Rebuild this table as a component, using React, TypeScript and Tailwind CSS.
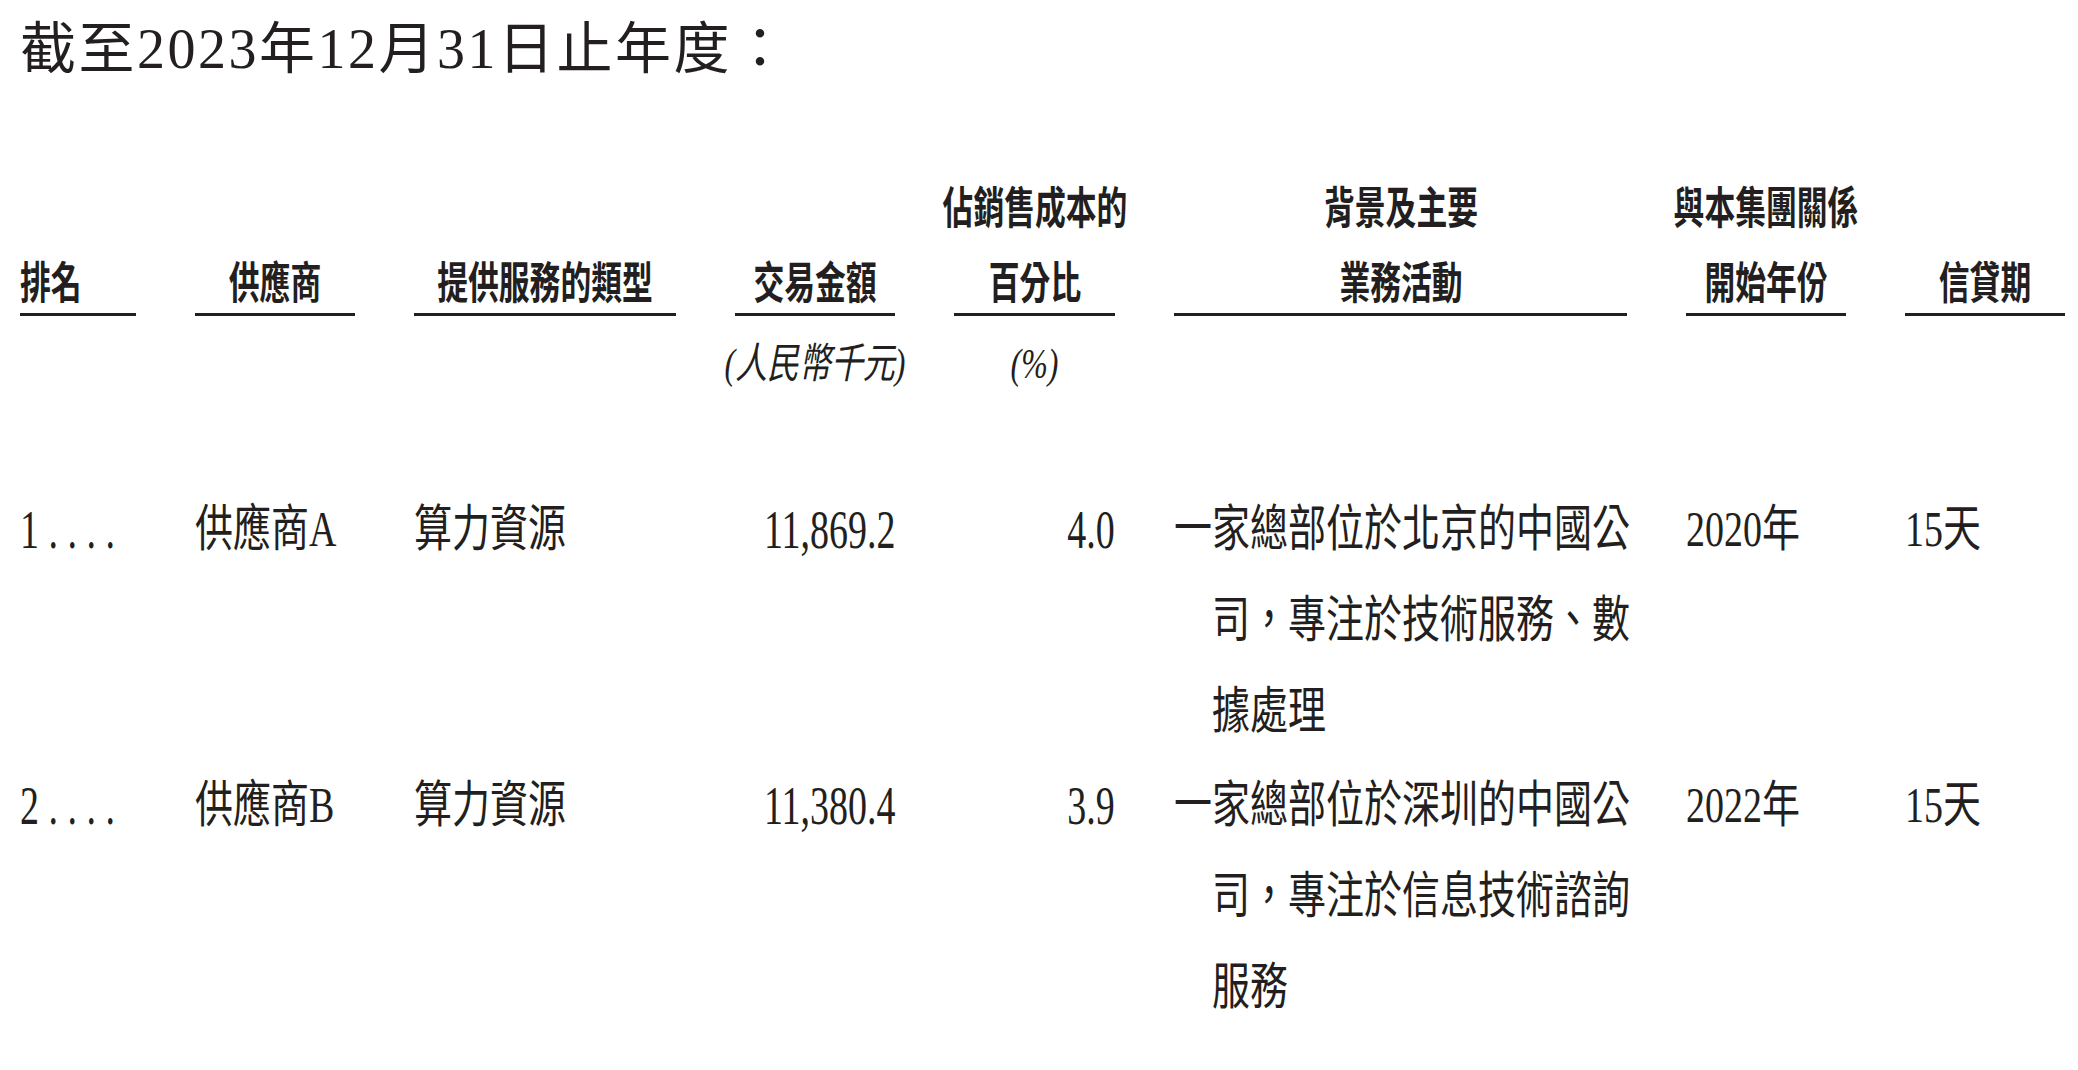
import React from "react";

const bodyFont = "font-['Liberation_Serif','Noto_Sans_CJK_TC',serif]";

function HeadCell({ lines, align = "center" }: { lines: string[]; align?: "left" | "center" }) {
  return (
    <div className="flex flex-col justify-end border-b-[3px] border-[#231f20] pb-[5px]">
      <div className={`flex flex-col gap-[19px] ${align === "left" ? "items-start" : "items-center"}`}>
        {lines.map((l, i) => (
          <span
            key={i}
            className={`inline-block whitespace-nowrap text-[44px] leading-[56px] font-bold font-['Noto_Sans_CJK_TC',sans-serif] scale-x-[0.7] ${align === "left" ? "origin-left" : "origin-center"}`}
          >
            {l}
          </span>
        ))}
      </div>
    </div>
  );
}

function Cell({ text, align = "left" }: { text: string; align?: "left" | "right" }) {
  return (
    <div className={`flex ${align === "right" ? "justify-end" : "justify-start"}`}>
      <span
        className={`inline-block whitespace-nowrap text-[50px] leading-[91px] ${bodyFont} scale-x-[0.76] ${align === "right" ? "origin-right" : "origin-left"}`}
      >
        {text}
      </span>
    </div>
  );
}

function NumCell({ text, align = "left" }: { text: string; align?: "left" | "right" }) {
  return (
    <div className={`flex h-[91px] items-center ${align === "right" ? "justify-end" : "justify-start"}`}>
      <span
        className={`inline-block whitespace-nowrap text-[55px] leading-[91px] ${bodyFont} scale-x-[0.69] ${align === "right" ? "origin-right" : "origin-left"}`}
      >
        {text}
      </span>
    </div>
  );
}

function Desc({ text }: { text: string }) {
  return (
    <div className="min-w-0">
      <div
        className={`w-[601px] pl-[1em] indent-[-1em] text-[50px] leading-[91px] ${bodyFont} scale-x-[0.76] origin-left`}
      >
        {text}
      </div>
    </div>
  );
}

function Row({ rank, name, type, amt, pct, desc, year, credit }: { rank: string; name: string; type: string; amt: string; pct: string; desc: string; year: string; credit: string }) {
  return (
    <>
      <NumCell text={rank} />
      <Cell text={name} />
      <Cell text={type} />
      <NumCell text={amt} align="right" />
      <NumCell text={pct} align="right" />
      <Desc text={desc} />
      <Cell text={year} />
      <Cell text={credit} />
    </>
  );
}

export default function App() {
  return (
    <div className="w-[2078px] h-[1070px] overflow-hidden bg-white text-[#231f20]">
      <div className={`pl-[20px] pt-[21px] text-[56px] leading-[56px] tracking-[2.5px] ${bodyFont}`}>
        截至2023年12月31日止年度：
      </div>

      <div className="pl-[20px] mt-[100px] grid grid-cols-[116px_160px_262px_160px_161px_453px_160px_160px] gap-x-[59px]">
        <HeadCell lines={["排名"]} align="left" />
        <HeadCell lines={["供應商"]} />
        <HeadCell lines={["提供服務的類型"]} />
        <HeadCell lines={["交易金額"]} />
        <HeadCell lines={["佔銷售成本的", "百分比"]} />
        <HeadCell lines={["背景及主要", "業務活動"]} />
        <HeadCell lines={["與本集團關係", "開始年份"]} />
        <HeadCell lines={["信貸期"]} />

        <div className="col-start-4 mt-[23px] flex justify-center">
          <span className={`inline-block whitespace-nowrap italic text-[42px] leading-[50px] ${bodyFont} scale-x-[0.76] origin-center`}>
            (人民幣千元)
          </span>
        </div>
        <div className="col-start-5 mt-[23px] flex justify-center">
          <span className={`inline-block whitespace-nowrap italic text-[42px] leading-[50px] ${bodyFont} scale-x-[0.76] origin-center`}>
            (%)
          </span>
        </div>
      </div>

      <div className="pl-[20px] mt-[95px] grid grid-cols-[116px_160px_262px_160px_161px_453px_160px_160px] gap-x-[59px] gap-y-[3px]">
        <Row
          rank="1 . . . ."
          name="供應商A"
          type="算力資源"
          amt="11,869.2"
          pct="4.0"
          desc="一家總部位於北京的中國公司，專注於技術服務、數據處理"
          year="2020年"
          credit="15天"
        />
        <Row
          rank="2 . . . ."
          name="供應商B"
          type="算力資源"
          amt="11,380.4"
          pct="3.9"
          desc="一家總部位於深圳的中國公司，專注於信息技術諮詢服務"
          year="2022年"
          credit="15天"
        />
      </div>
    </div>
  );
}
